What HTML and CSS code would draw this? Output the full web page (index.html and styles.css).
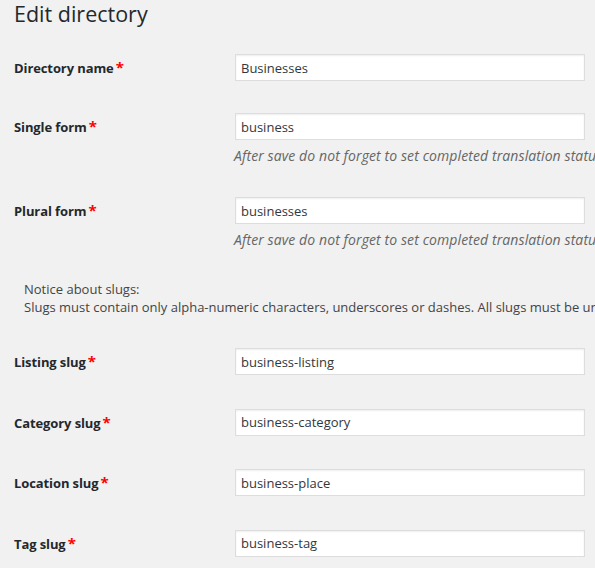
FILE: index.html
```html
<!DOCTYPE html>
<html>
<head>
<meta charset="utf-8">
<link rel="stylesheet" href="styles.css">
</head>
<body>
<div class="wrap">
  <h1 class="title">Edit directory</h1>
  <div class="row">
    <label class="label">Directory name<span class="req">*</span></label>
    <div class="field"><input class="input" type="text" value="Businesses"></div>
  </div>
  <div class="row">
    <label class="label">Single form<span class="req">*</span></label>
    <div class="field">
      <input class="input" type="text" value="business">
      <p class="desc">After save do not forget to set completed translation status for this string on String Translation page.</p>
    </div>
  </div>
  <div class="row">
    <label class="label">Plural form<span class="req">*</span></label>
    <div class="field">
      <input class="input" type="text" value="businesses">
      <p class="desc">After save do not forget to set completed translation status for this string on String Translation page.</p>
    </div>
  </div>
  <div class="notice">
    <p class="notice-line">Notice about slugs:</p>
    <p class="notice-line">Slugs must contain only alpha-numeric characters, underscores or dashes. All slugs must be unique.</p>
  </div>
  <div class="row slug">
    <label class="label">Listing slug<span class="req">*</span></label>
    <div class="field"><input class="input" type="text" value="business-listing"></div>
  </div>
  <div class="row slug">
    <label class="label">Category slug<span class="req">*</span></label>
    <div class="field"><input class="input" type="text" value="business-category"></div>
  </div>
  <div class="row slug">
    <label class="label">Location slug<span class="req">*</span></label>
    <div class="field"><input class="input" type="text" value="business-place"></div>
  </div>
  <div class="row slug">
    <label class="label">Tag slug<span class="req">*</span></label>
    <div class="field"><input class="input" type="text" value="business-tag"></div>
  </div>
</div>
</body>
</html>
```
FILE: styles.css
```css
html, body {
  margin: 0;
  padding: 0;
  background: #f1f1f1;
  overflow: hidden;
}
body {
  font-family: "Open Sans", "Noto Sans", sans-serif;
  font-size: 13px;
  color: #444;
}
.wrap {
  padding-left: 14px;
  width: 900px;
}
.title {
  margin: 0;
  padding: 0;
  font-size: 21.5px;
  font-weight: 400;
  line-height: 28px;
  color: #23282d;
  height: 38px;
}
.row {
  display: flex;
  align-items: flex-start;
  padding: 16px 0;
}
.row.slug {
  padding: 16.5px 0 17px;
}
.label {
  width: 221px;
  height: 27px;
  box-sizing: border-box;
  flex: none;
  font-weight: 700;
  font-size: 13px;
  letter-spacing: -0.1px;
  line-height: 25px;
  padding-top: 2px;
  color: #23282d;
}
.req {
  color: #f00;
  font-size: 15px;
  vertical-align: 0;
  margin-left: 2px;
  line-height: 0;
}
.field {
  flex: none;
  width: 350px;
}
.input {
  display: block;
  box-sizing: border-box;
  width: 350px;
  height: 27px;
  margin: 0;
  padding: 0 5px;
  border: 1px solid #ddd;
  background: #fff;
  box-shadow: inset 0 1px 2px rgba(0,0,0,.07);
  font-family: "Open Sans", "Noto Sans", sans-serif;
  font-size: 13px;
  color: #32373c;
  outline: none;
}
.desc {
  margin: 7px 0 0 -1px;
  font-style: italic;
  font-size: 14px;
  letter-spacing: 0.1px;
  line-height: 18px;
  color: #666;
  white-space: nowrap;
}
.notice {
  padding: 15px 0 15.5px 10px;
}
.notice-line {
  margin: 0;
  line-height: 18px;
  white-space: nowrap;
  color: #444;
}
```
